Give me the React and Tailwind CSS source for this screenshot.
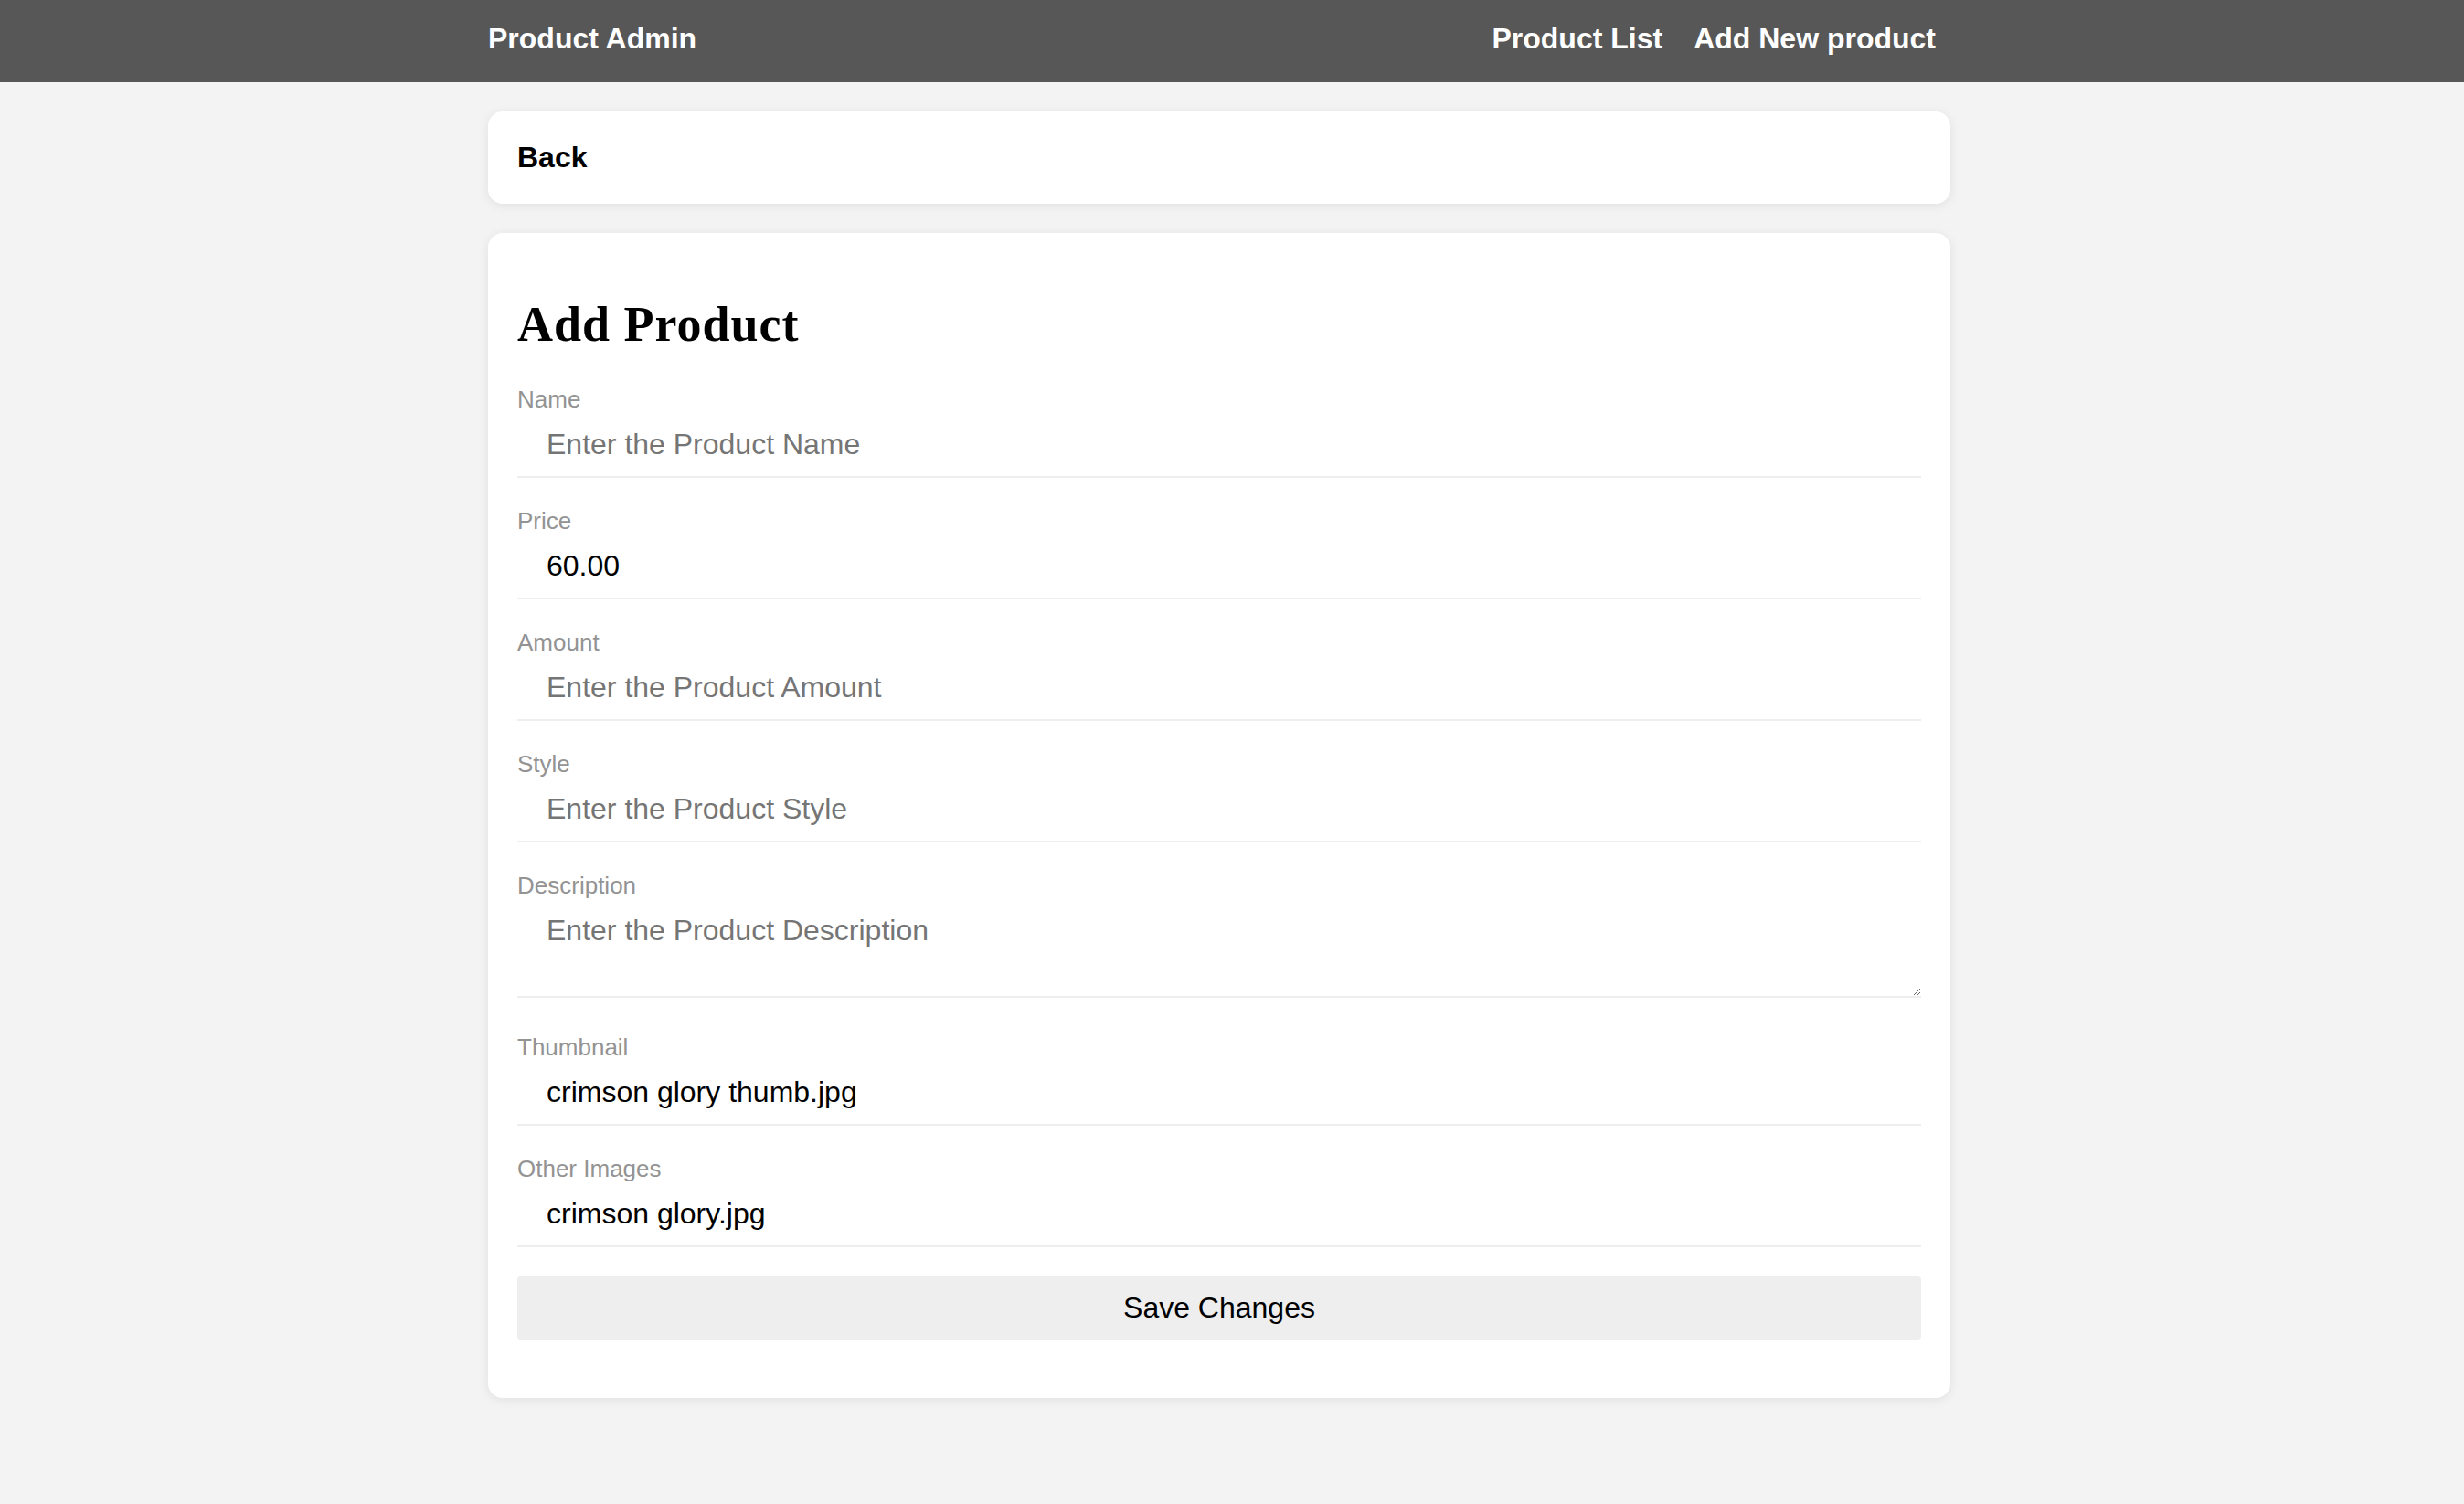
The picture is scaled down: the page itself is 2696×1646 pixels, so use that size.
import React from 'react';

const sans = { fontFamily: '"Liberation Sans", Arial, sans-serif' };

const fields = [
  { label: 'Name', placeholder: 'Enter the Product Name', value: '' },
  { label: 'Price', placeholder: 'Enter the Product Price', value: '60.00' },
  { label: 'Amount', placeholder: 'Enter the Product Amount', value: '' },
  { label: 'Style', placeholder: 'Enter the Product Style', value: '' },
  { label: 'Description', placeholder: 'Enter the Product Description', value: '', multiline: true },
  { label: 'Thumbnail', placeholder: 'Enter the Thumbnail', value: 'crimson glory thumb.jpg' },
  { label: 'Other Images', placeholder: 'Enter Other Images', value: 'crimson glory.jpg' },
];

// champ de formulaire : label gris + input souligné
const Field = ({ label, placeholder, value, multiline }) => {
  const inputClass =
    'block w-full border-0 border-b-2 border-[#eeeeee] bg-transparent px-8 py-4 text-[32px] leading-[37px] text-black outline-none placeholder:text-[#757575]';
  return (
    <div className={multiline ? 'mb-[39px]' : 'mb-8'}>
      <label className="block text-[26px] leading-[30px] text-[#939393]">{label}</label>
      {multiline ? (
        <textarea rows={2} placeholder={placeholder} defaultValue={value} className={inputClass} style={sans} />
      ) : (
        <input type="text" placeholder={placeholder} defaultValue={value} className={inputClass} style={sans} />
      )}
    </div>
  );
};

const App = () => {
  return (
    <div className="min-h-screen bg-[#f3f3f3]" style={sans}>
      <header className="h-[90px] bg-[#575757]">
        <div className="mx-auto w-[1628px]">
          <div className="flex w-[1600px] items-start justify-between pr-4 pt-6 text-[32px] font-bold leading-[36px] text-white">
            <a href="#">Product Admin</a>
            <nav className="flex gap-[34px]">
              <a href="#">Product List</a>
              <a href="#">Add New product</a>
            </nav>
          </div>
        </div>
      </header>

      <main className="mx-auto w-[1628px] pt-8 pb-16">
        <div className="w-[1600px]">
          <div className="mb-8 rounded-[16px] bg-white p-8 shadow-[0_2px_12px_rgba(0,0,0,0.08)]">
            <a href="#" className="text-[32px] font-bold leading-[37px] text-black">Back</a>
          </div>

          <div className="rounded-[16px] bg-white px-8 pt-8 pb-16 shadow-[0_2px_12px_rgba(0,0,0,0.08)]">
            <h2
              className="mt-10 mb-[39px] text-[54px] font-bold leading-[56px] tracking-[1px] text-black"
              style={{ fontFamily: '"Liberation Serif", Georgia, serif' }}
            >
              Add Product
            </h2>
            <form onSubmit={(e) => e.preventDefault()}>
              {fields.map((f) => (
                <Field key={f.label} {...f} />
              ))}
              <button
                type="submit"
                className="block w-full rounded-[4px] bg-[#eeeeee] py-4 text-[32px] leading-[37px] text-black"
                style={sans}
              >
                Save Changes
              </button>
            </form>
          </div>
        </div>
      </main>
    </div>
  );
};

export default App;
